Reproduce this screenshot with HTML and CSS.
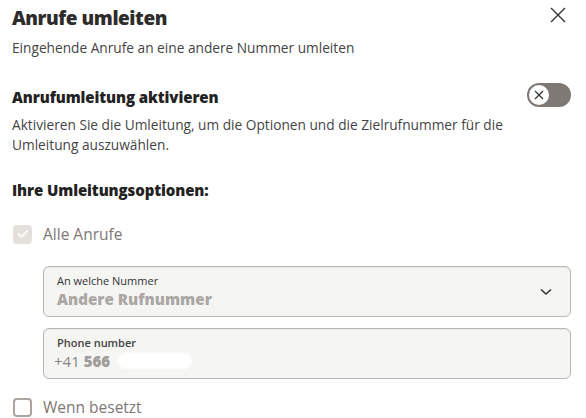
FILE: index.html
```html
<!DOCTYPE html>
<html lang="de">
<head>
<meta charset="utf-8">
<link rel="stylesheet" href="styles.css">
</head>
<body>
<div class="dialog">
  <header class="head">
    <h1 class="title">Anrufe umleiten</h1>
    <button class="close" aria-label="Schließen">
      <svg width="16" height="16" viewBox="0 0 16 16"><path d="M1 1L15 15M15 1L1 15" stroke="#333" stroke-width="1.4" fill="none"/></svg>
    </button>
  </header>
  <p class="subtitle">Eingehende Anrufe an eine andere Nummer umleiten</p>

  <section class="section">
    <div class="row">
      <h2 class="h2">Anrufumleitung aktivieren</h2>
      <span class="toggle"><span class="knob"><svg width="10" height="10" viewBox="0 0 10 10"><path d="M1 1L9 9M9 1L1 9" stroke="#333" stroke-width="1.2" fill="none"/></svg></span></span>
    </div>
    <p class="desc">Aktivieren Sie die Umleitung, um die Optionen und die Zielrufnummer für die Umleitung auszuwählen.</p>
  </section>

  <h2 class="h2 options">Ihre Umleitungsoptionen:</h2>

  <div class="check-row">
    <span class="cb checked"><svg width="12" height="10" viewBox="0 0 12 10"><path d="M1.5 5L4.5 8L10.5 1.5" stroke="#fff" stroke-width="1.6" fill="none" stroke-linecap="round" stroke-linejoin="round"/></svg></span>
    <span class="cb-label">Alle Anrufe</span>
  </div>

  <div class="fields">
    <div class="field">
      <div class="field-body">
        <span class="f-label">An welche Nummer</span>
        <span class="f-value">Andere Rufnummer</span>
      </div>
      <svg class="chev" width="12" height="8" viewBox="0 0 12 8"><path d="M1 1.5L6 6L11 1.5" stroke="#333" stroke-width="1.6" fill="none"/></svg>
    </div>
    <div class="field">
      <div class="field-body">
        <span class="f-label phone-label">Phone number</span>
        <span class="f-phone"><span class="prefix">+41</span> <b class="num">566</b><span class="redact"></span></span>
      </div>
    </div>
  </div>

  <div class="check-row last">
    <span class="cb"></span>
    <span class="cb-label">Wenn besetzt</span>
  </div>
</div>
</body>
</html>
```

FILE: styles.css
```css
* { box-sizing: border-box; }
html, body { margin: 0; padding: 0; background: #fff; }
body {
  font-family: "Open Sans", Lato, "Liberation Sans", sans-serif;
  color: #333;
  width: 586px;
  height: 418px;
  overflow: hidden;
}
.dialog {
  padding: 4px 15px 0 12px;
}
.head {
  display: flex;
  justify-content: space-between;
  align-items: flex-start;
}
.title {
  margin: 0;
  font-size: 19px;
  line-height: 28px;
  font-weight: 800;
  color: #2e2c2b;
  letter-spacing: -0.45px;
}
.close {
  border: 0;
  background: none;
  padding: 0;
  margin: 3px 5px 0 0;
  width: 16px;
  height: 16px;
  display: flex;
}
.subtitle {
  margin: 7px 0 0;
  font-size: 13.7px;
  line-height: 18px;
  color: #444;
}
.section { margin-top: 29px; }
.row {
  display: flex;
  justify-content: space-between;
  align-items: flex-start;
}
.h2 {
  margin: 0;
  font-size: 15px;
  line-height: 22px;
  font-weight: 800;
  color: #222;
  letter-spacing: -0.1px;
}
.toggle {
  width: 44px;
  height: 24px;
  border-radius: 12px;
  background: #7f7975;
  display: flex;
  align-items: center;
  padding-left: 2px;
  margin-top: -3px;
}
.knob {
  width: 20px;
  height: 20px;
  border-radius: 50%;
  background: #fff;
  display: flex;
  align-items: center;
  justify-content: center;
}
.desc {
  margin: 7px 0 0;
  font-size: 13.7px;
  line-height: 20px;
  color: #444;
  max-width: 530px;
}
.options { margin-top: 24px; }
.check-row {
  display: flex;
  align-items: center;
  gap: 11px;
  margin-top: 23px;
  padding-left: 1px;
}
.check-row.last { margin-top: 18px; }
.cb {
  width: 19px;
  height: 19px;
  border: 2px solid #aaa5a1;
  border-radius: 4px;
  display: flex;
  align-items: center;
  justify-content: center;
}
.cb.checked {
  background: #e4e1dd;
  border-color: #e4e1dd;
}
.cb-label {
  font-size: 15.5px;
  line-height: 20px;
  color: #7d7875;
}
.fields {
  margin: 22px 0 0 31px;
  display: flex;
  flex-direction: column;
  gap: 11px;
}
.field {
  height: 51px;
  border: 1px solid #b9b6b3;
  border-radius: 6px;
  background: #f5f5f3;
  display: flex;
  align-items: center;
  padding: 0 18px 0 13px;
  justify-content: space-between;
  box-shadow: inset 0 1px 1px rgba(0,0,0,0.06);
}
.field-body {
  display: flex;
  flex-direction: column;
}
.f-label {
  font-size: 11px;
  line-height: 14px;
  color: #333;
}
.phone-label { font-weight: 600; color: #444; }
.f-value {
  font-size: 15.2px;
  line-height: 22px;
  font-weight: 800;
  color: #aaa7a4;
}
.f-phone {
  font-size: 15px;
  line-height: 22px;
  display: flex;
  align-items: center;
  gap: 4px;
  margin-left: -3px;
}
.prefix { color: #8a8683; }
.num { color: #9f9c99; font-weight: 800; }
.redact {
  display: inline-block;
  width: 74px;
  height: 16px;
  margin-left: 4px;
  background: #fff;
  border-radius: 8px;
  filter: blur(1px);
}
.chev { display: block; }
```
